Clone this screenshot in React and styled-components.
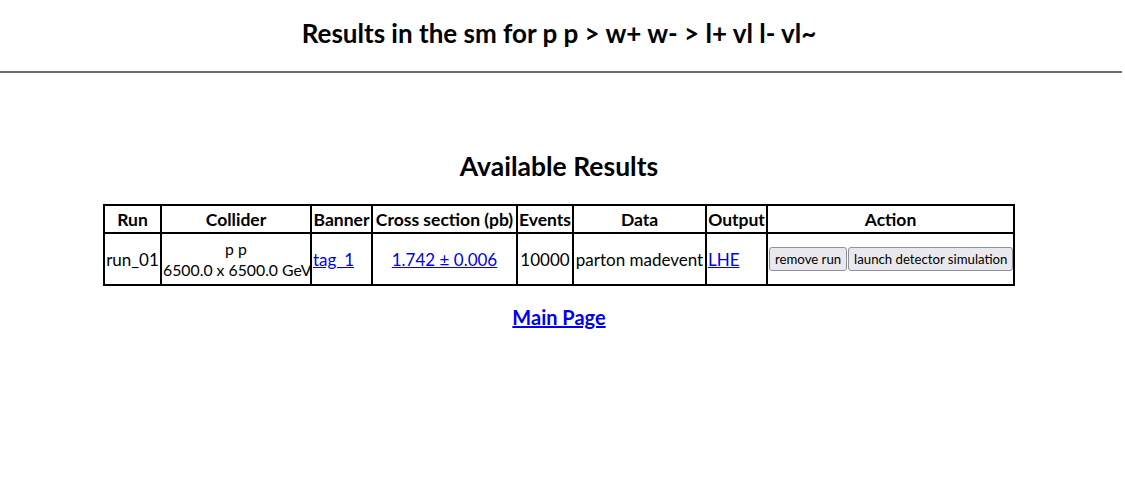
import React from "react";
import styled, { createGlobalStyle } from "styled-components";

const GlobalStyle = createGlobalStyle`
  body {
    margin: 0;
    background: #fff;
    font-family: Lato, "Noto Sans", sans-serif;
    color: #000;
  }
`;

const Page = styled.div`
  width: 1118px;
`;

const Header = styled.header`
  display: flex;
  justify-content: center;
  align-items: center;
  height: 71px;
`;

const Title = styled.h1`
  margin: 0 0 5px;
  font-size: 26px;
  font-weight: 700;
  line-height: 32px;
`;

const Rule = styled.div`
  width: 1122px;
  height: 2px;
  background: #6b6b6b;
`;

const Main = styled.main`
  display: flex;
  flex-direction: column;
  align-items: center;
  padding-top: 77px;
`;

const SubTitle = styled.h2`
  margin: 0 0 22px;
  font-size: 26.5px;
  font-weight: 700;
  line-height: 32px;
`;

const Table = styled.table`
  border-collapse: collapse;
  table-layout: fixed;
  width: 910px;
  border: 2px solid #000;
  font-size: 17px;
`;

const Col = styled.col`
  width: ${(p) => p.$w}px;
`;

const Th = styled.th`
  border: 2px solid #000;
  padding: 0;
  font-size: 17.5px;
  font-weight: 700;
  height: 26px;
  white-space: nowrap;
`;

const Td = styled.td`
  border: 2px solid #000;
  padding: 0 1px;
  line-height: 21px;
  height: 50px;
  white-space: nowrap;
  font-size: ${(p) => p.$size || 17}px;
  text-align: ${(p) => p.$align || "center"};
`;

const Link = styled.a`
  color: #0000ee;
  text-decoration: underline;
`;

const Button = styled.button`
  font-family: Lato, "Noto Sans", sans-serif;
  font-size: 13.2px;
  height: 24px;
  padding: 0 5px;
  margin: 0;
  background: #e9e9ed;
  border: 1px solid #8f8f9d;
  border-radius: 3px;
  color: #000;
`;

const Actions = styled.div`
  display: flex;
  justify-content: flex-start;
  gap: 1px;
`;

const MainLink = styled(Link)`
  margin-top: 19px;
  font-size: 20px;
  font-weight: 700;
`;

const widths = [57, 150, 61, 145, 56, 133, 61, 247];

export default function App() {
  return (
    <Page>
      <GlobalStyle />
      <Header>
        <Title>Results in the sm for p p &gt; w+ w- &gt; l+ vl l- vl~</Title>
      </Header>
      <Rule />
      <Main>
        <SubTitle>Available Results</SubTitle>
        <Table>
          <colgroup>
            {widths.map((w, i) => (
              <Col key={i} $w={w} />
            ))}
          </colgroup>
          <thead>
            <tr>
              <Th>Run</Th>
              <Th>Collider</Th>
              <Th>Banner</Th>
              <Th>Cross section (pb)</Th>
              <Th>Events</Th>
              <Th>Data</Th>
              <Th>Output</Th>
              <Th>Action</Th>
            </tr>
          </thead>
          <tbody>
            <tr>
              <Td>run_01</Td>
              <Td $size={15.8}>
                p p<br />
                6500.0 x 6500.0 GeV
              </Td>
              <Td $align="left">
                <Link href="#">tag_1</Link>
              </Td>
              <Td>
                <Link href="#">1.742 ± 0.006</Link>
              </Td>
              <Td>10000</Td>
              <Td>parton madevent</Td>
              <Td $align="left">
                <Link href="#">LHE</Link>
              </Td>
              <Td>
                <Actions>
                  <Button>remove run</Button>
                  <Button>launch detector simulation</Button>
                </Actions>
              </Td>
            </tr>
          </tbody>
        </Table>
        <MainLink href="#">Main Page</MainLink>
      </Main>
    </Page>
  );
}
